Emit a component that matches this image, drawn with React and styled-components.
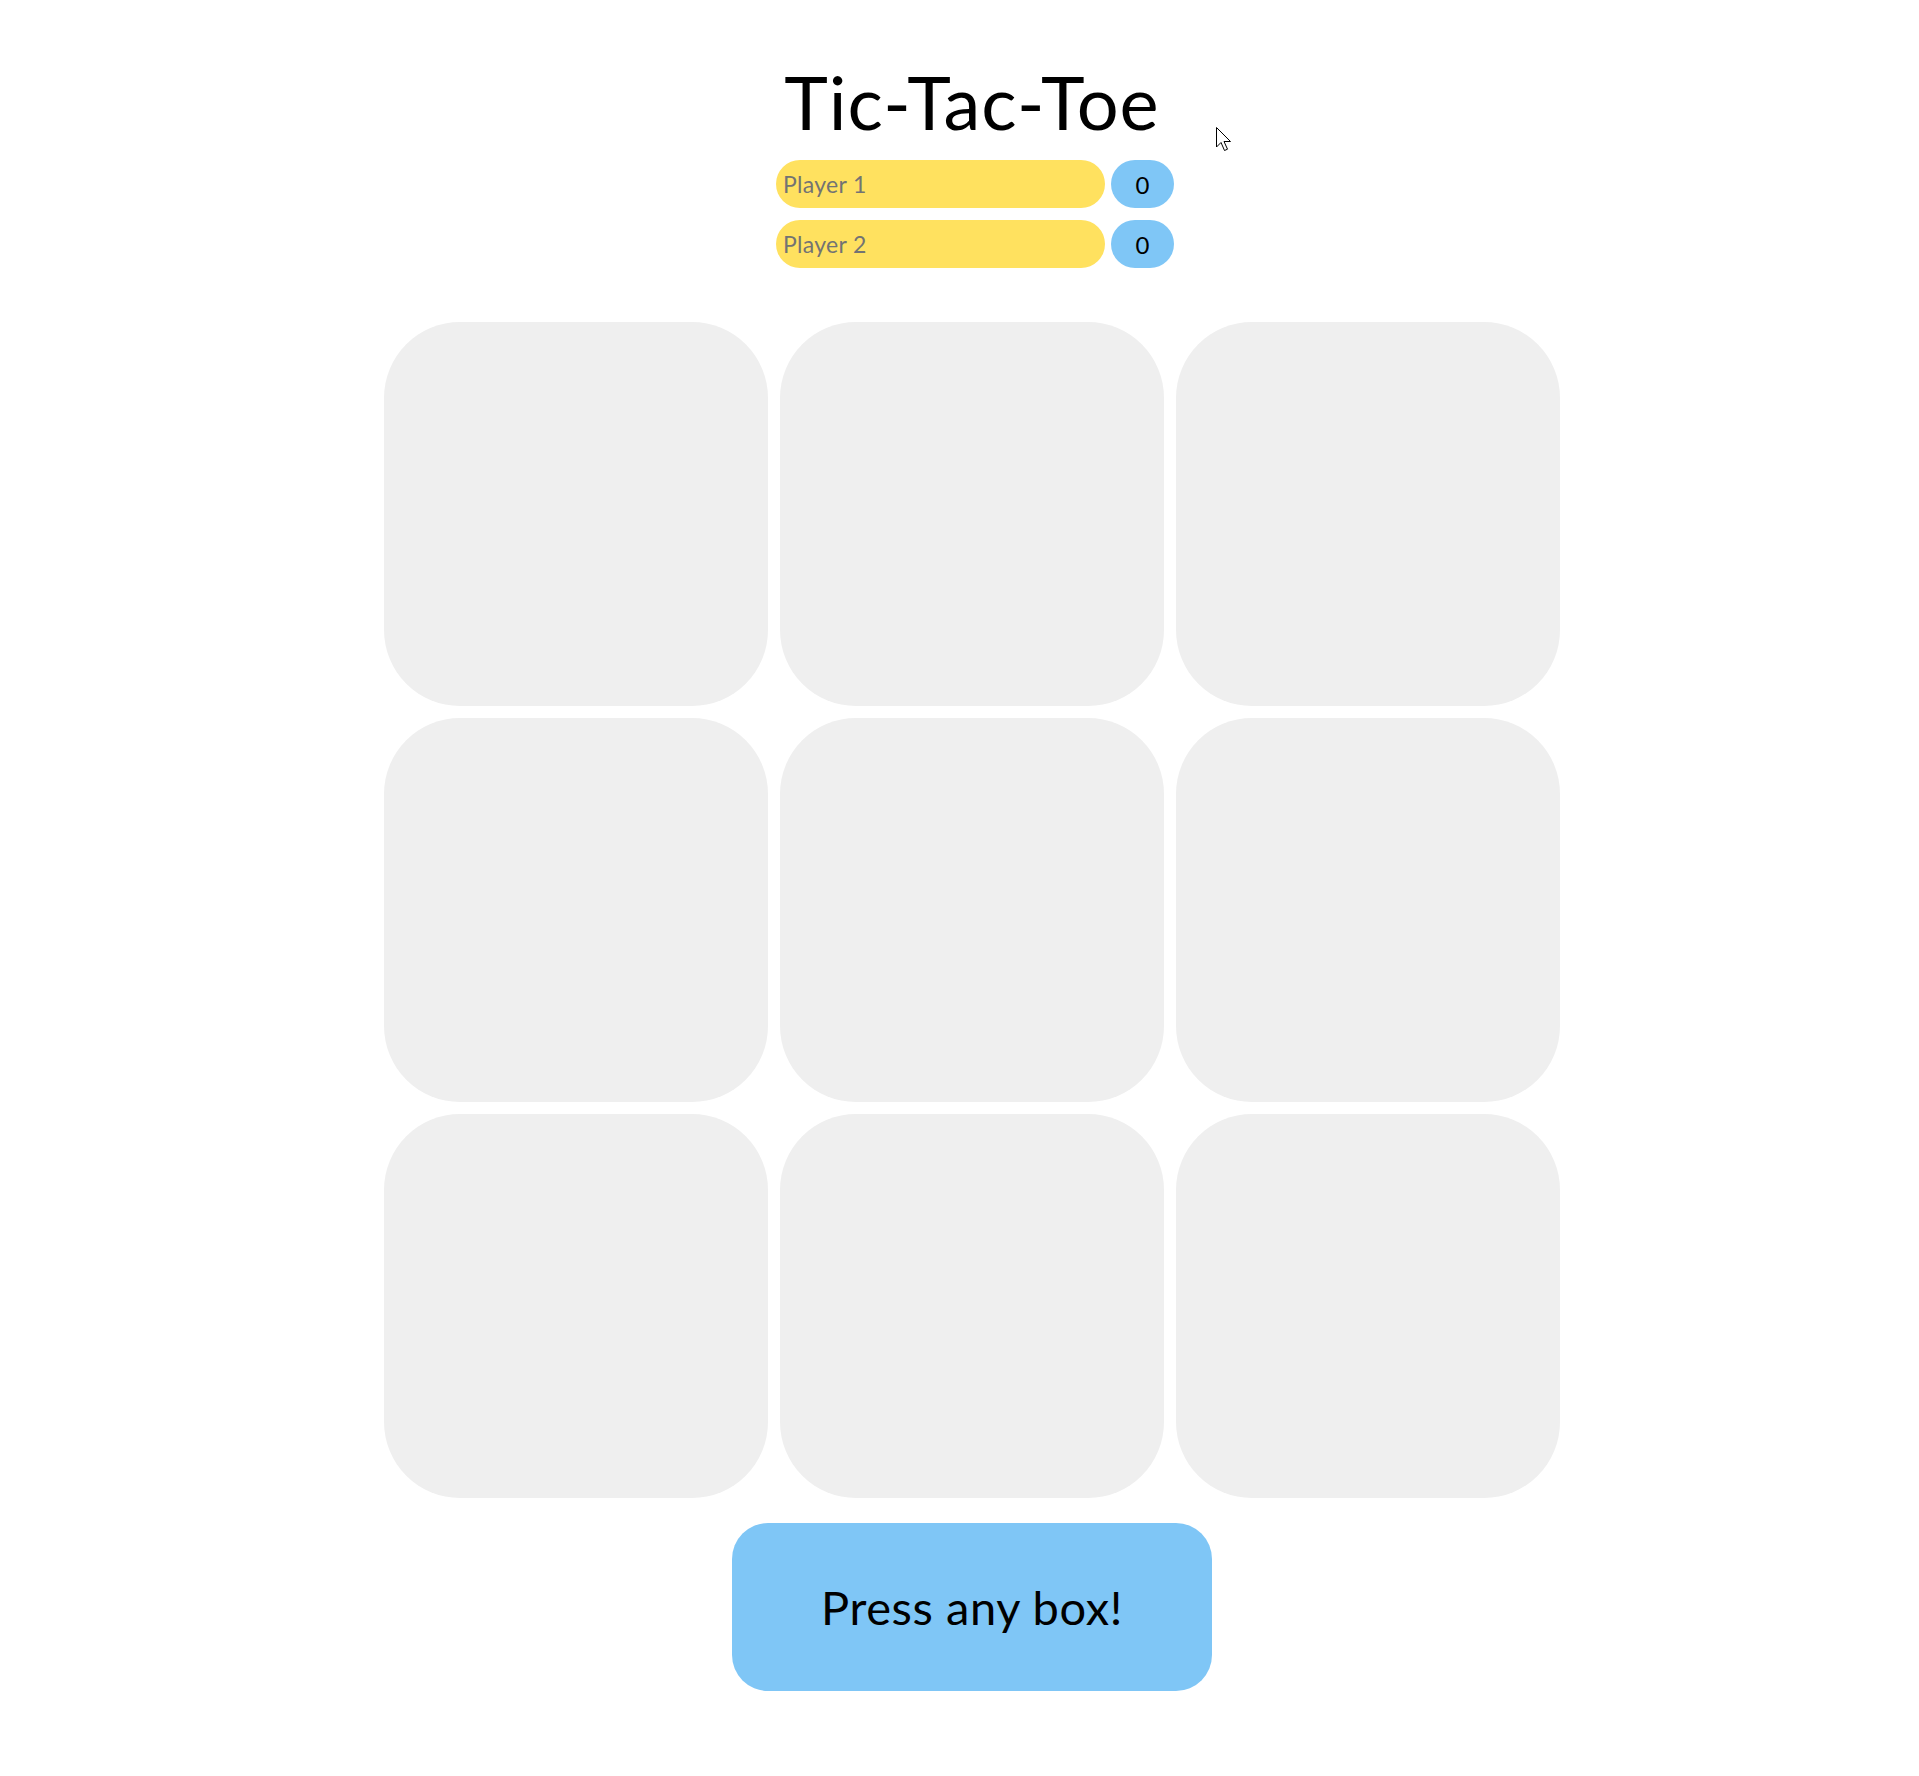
import React from "react";
import styled, { createGlobalStyle } from "styled-components";

const Global = createGlobalStyle`
  html, body { margin: 0; padding: 0; background: #ffffff; }
  body { font-family: Lato, "Noto Sans", sans-serif; }
`;

const Page = styled.main`
  position: relative;
  display: flex;
  flex-direction: column;
  align-items: center;
  padding-left: 25px;
  padding-top: 65px;
  min-height: 1776px;
  box-sizing: border-box;
`;

const Title = styled.h1`
  margin: 0;
  font-family: Lato, sans-serif;
  font-weight: 400;
  font-size: 74px;
  line-height: 74px;
  letter-spacing: 1px;
  color: #000;
`;

const Players = styled.div`
  display: flex;
  flex-direction: column;
  gap: 12px;
  margin-top: 21px;
  margin-left: 6px;
`;

const PlayerRow = styled.div`
  display: flex;
  gap: 6px;
`;

const NameBox = styled.div`
  width: 329px;
  height: 48px;
  border-radius: 24px;
  background: #ffe15f;
  box-sizing: border-box;
  padding-left: 7px;
  display: flex;
  align-items: center;
  font-size: 23px;
  letter-spacing: 0.3px;
  color: #737373;
`;

const Score = styled.div`
  width: 63px;
  height: 48px;
  border-radius: 24px;
  background: #7fc6f6;
  display: flex;
  align-items: center;
  justify-content: center;
  font-size: 24px;
  color: #000;
`;

const Board = styled.div`
  display: grid;
  grid-template-columns: repeat(3, 384px);
  grid-auto-rows: 384px;
  gap: 12px;
  margin-top: 54px;
`;

const Cell = styled.div`
  background: #efefef;
  border-radius: 76px;
`;

const Status = styled.div`
  margin-top: 25px;
  width: 480px;
  height: 168px;
  border-radius: 36px;
  background: #7fc6f6;
  display: flex;
  align-items: center;
  justify-content: center;
  font-size: 47px;
  letter-spacing: 0.6px;
  color: #000;
`;

const Cursor = styled.svg`
  position: absolute;
  left: 1216px;
  top: 127px;
`;

export default function App() {
  return (
    <>
      <Global />
      <Page>
        <Title>Tic-Tac-Toe</Title>
        <Players>
          <PlayerRow>
            <NameBox>Player 1</NameBox>
            <Score>0</Score>
          </PlayerRow>
          <PlayerRow>
            <NameBox>Player 2</NameBox>
            <Score>0</Score>
          </PlayerRow>
        </Players>
        <Board>
          {Array.from({ length: 9 }).map((_, i) => (
            <Cell key={i} />
          ))}
        </Board>
        <Status>Press any box!</Status>
        <Cursor width="18" height="28" viewBox="0 0 18 28">
          <path
            d="M0.5 0.5 L0.5 20 L5 15.5 L8.5 23.5 L11.5 22.2 L8 14.5 L14.5 14.5 Z"
            fill="#fff"
            stroke="#000"
            strokeWidth="1"
            strokeLinejoin="miter"
          />
        </Cursor>
      </Page>
    </>
  );
}
